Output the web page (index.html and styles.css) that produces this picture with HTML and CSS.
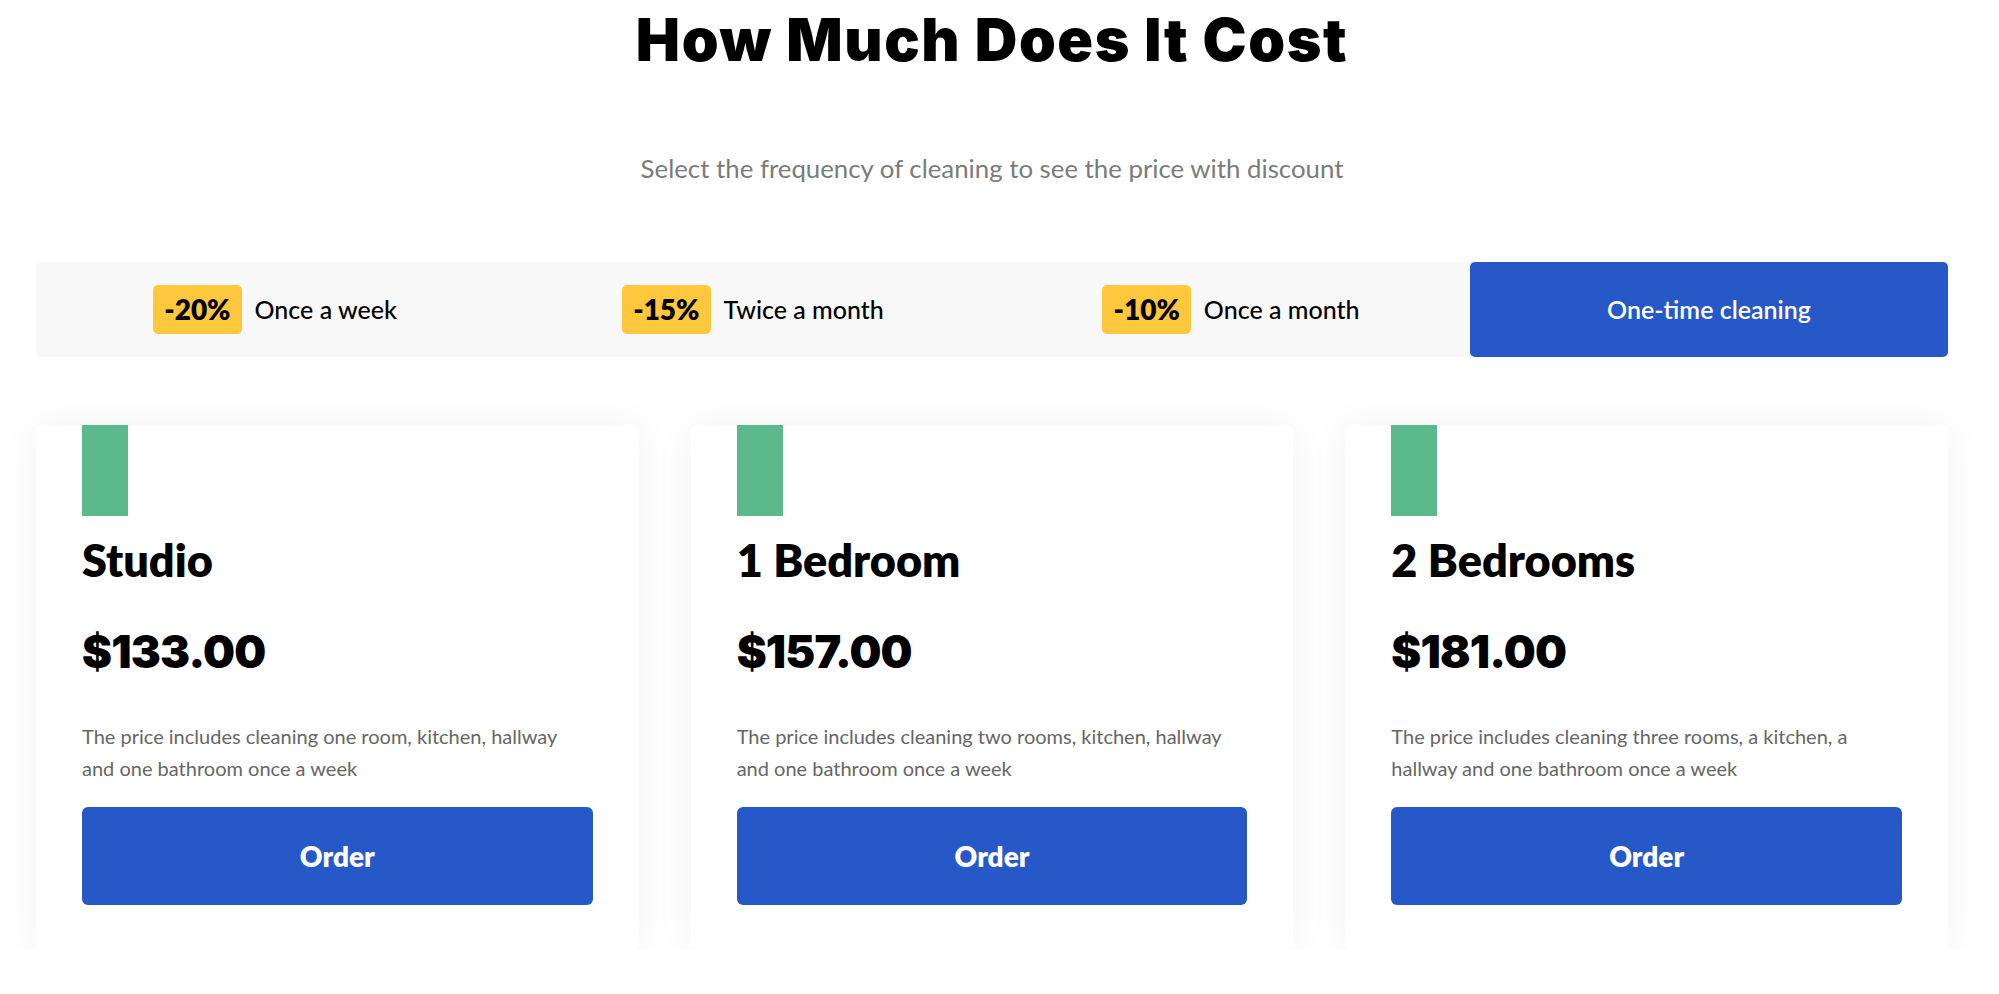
FILE: index.html
```html
<!DOCTYPE html>
<html lang="en">
<head>
<meta charset="utf-8">
<title>How Much Does It Cost</title>
<link rel="stylesheet" href="styles.css">
</head>
<body>
<div class="page">
  <section class="pricing">
    <h1 class="title">How Much Does It Cost</h1>
    <p class="subtitle">Select the frequency of cleaning to see the price with discount</p>

    <div class="tabs">
      <div class="tab">
        <span class="badge">-20%</span>
        <span class="tab-label">Once a week</span>
      </div>
      <div class="tab">
        <span class="badge">-15%</span>
        <span class="tab-label">Twice a month</span>
      </div>
      <div class="tab">
        <span class="badge">-10%</span>
        <span class="tab-label">Once a month</span>
      </div>
      <div class="tab tab-active">
        <span class="tab-label">One-time cleaning</span>
      </div>
    </div>

    <div class="cards">
      <div class="card">
        <div class="card-mark"></div>
        <h2 class="card-title">Studio</h2>
        <div class="card-price">$133.00</div>
        <p class="card-desc">The price includes cleaning one room, kitchen, hallway and one bathroom once a week</p>
        <button class="card-btn">Order</button>
      </div>
      <div class="card">
        <div class="card-mark"></div>
        <h2 class="card-title">1 Bedroom</h2>
        <div class="card-price">$157.00</div>
        <p class="card-desc">The price includes cleaning two rooms, kitchen, hallway and one bathroom once a week</p>
        <button class="card-btn">Order</button>
      </div>
      <div class="card">
        <div class="card-mark"></div>
        <h2 class="card-title">2 Bedrooms</h2>
        <div class="card-price">$181.00</div>
        <p class="card-desc">The price includes cleaning three rooms, a kitchen, a hallway and one bathroom once a week</p>
        <button class="card-btn">Order</button>
      </div>
    </div>
  </section>
</div>
</body>
</html>
```

FILE: styles.css
```css
* { box-sizing: border-box; }

html, body {
  margin: 0;
  padding: 0;
  background: #ffffff;
}

body {
  font-family: "Lato", "Noto Sans", sans-serif;
  color: #000;
}

.page {
  width: 1984px;
}

.pricing {
  width: 1912px;
  margin: 0 auto;
  display: flex;
  flex-direction: column;
}

.title {
  margin: 0;
  padding-top: 10px;
  font-family: "Inter", "Liberation Sans", sans-serif;
  font-weight: 900;
  font-size: 59px;
  line-height: 1;
  letter-spacing: 1.6px;
  text-align: center;
  color: #000;
}

.subtitle {
  margin: 84px 0 0;
  font-size: 25.8px;
  line-height: 1.2;
  font-weight: 400;
  color: #7b7b7b;
  text-align: center;
}

.tabs {
  margin-top: 78px;
  height: 95px;
  display: grid;
  grid-template-columns: repeat(4, 1fr);
  background: #f8f8f8;
  border-radius: 5px;
}

.tab {
  display: flex;
  align-items: center;
  justify-content: center;
  gap: 13px;
}

.badge {
  display: flex;
  align-items: center;
  justify-content: center;
  height: 49px;
  padding: 0 11px;
  background: #ffc73c;
  border-radius: 5px;
  font-size: 28px;
  font-weight: 800;
  color: #000;
}

.tab-label {
  font-size: 25px;
  font-weight: 500;
  color: #000;
}

.tab-active {
  background: #2658c7;
  border-radius: 5px;
}

.tab-active .tab-label {
  color: #fff;
  font-weight: 600;
}

.cards {
  margin-top: 68px;
  display: grid;
  grid-template-columns: repeat(3, 1fr);
  gap: 52px;
}

.card {
  display: flex;
  flex-direction: column;
  padding: 0 46px 45px;
  background: #fff;
  border-radius: 6px;
  box-shadow: 0 0 40px rgba(0, 0, 0, 0.05);
}

.card-mark {
  width: 46px;
  height: 91px;
  background: #5bb98b;
}

.card-title {
  margin: 17px 0 0;
  font-size: 45px;
  font-weight: 800;
  line-height: 1.2;
}

.card-price {
  margin-top: 42px;
  font-family: "Inter", "Liberation Sans", sans-serif;
  font-weight: 900;
  font-size: 45px;
  line-height: 1;
  letter-spacing: -0.8px;
}

.card-desc {
  margin: 46px 0 0;
  max-width: 500px;
  font-size: 20px;
  line-height: 32px;
  color: #666;
}

.card-btn {
  margin-top: 23px;
  height: 98px;
  width: 100%;
  border: 0;
  border-radius: 6px;
  background: #2658c7;
  color: #fff;
  font-family: "Lato", "Noto Sans", sans-serif;
  font-size: 28px;
  font-weight: 800;
  display: flex;
  align-items: center;
  justify-content: center;
}
```
